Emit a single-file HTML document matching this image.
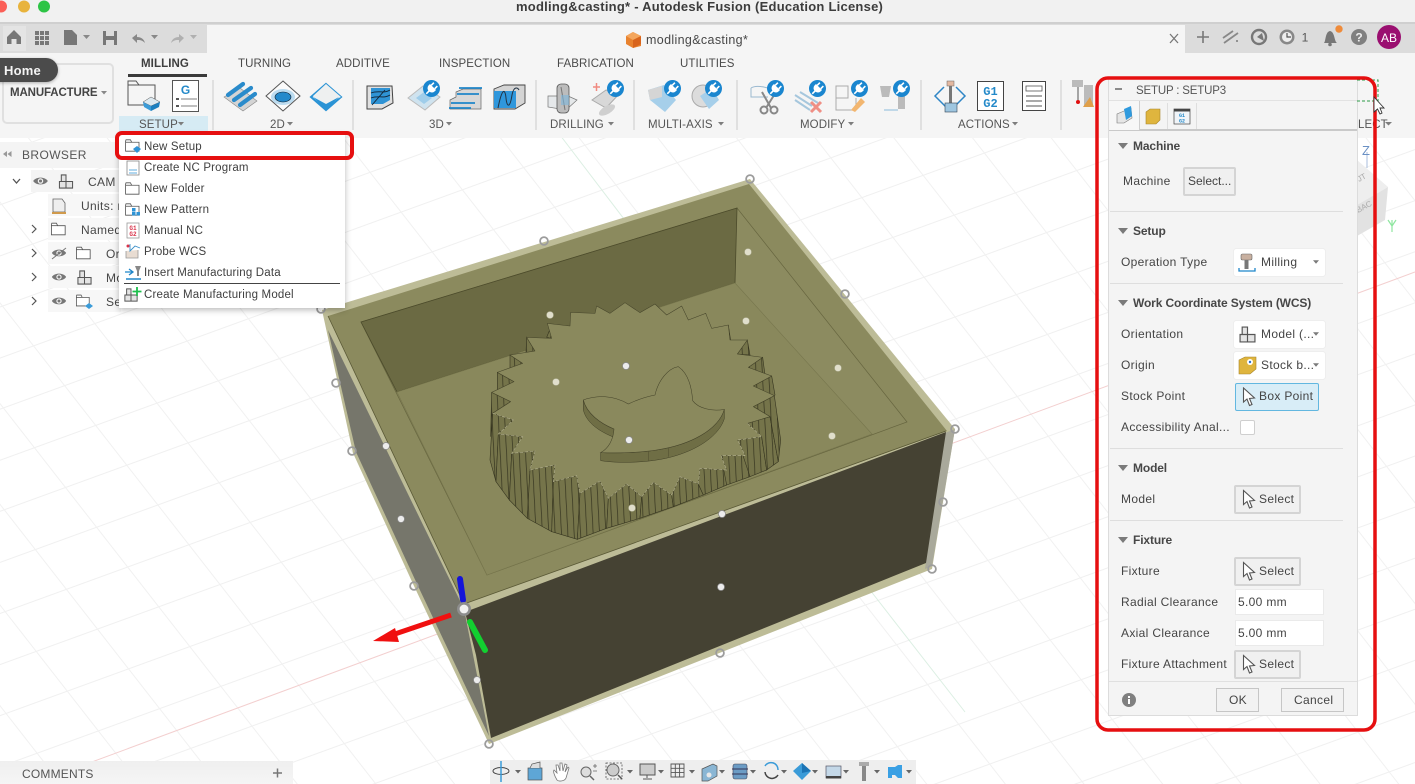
<!DOCTYPE html>
<html><head><meta charset="utf-8"><title>modling&amp;casting</title>
<style>
html,body{margin:0;padding:0;width:1415px;height:784px;overflow:hidden;background:#fff}
body{position:relative;font-family:"Liberation Sans",sans-serif;color:#444}
.a{position:absolute}
.t{position:absolute;white-space:nowrap;line-height:14px;font-size:12px;letter-spacing:.35px;color:#474747}
.b{font-weight:bold}
.tab{font-size:11.5px;letter-spacing:.1px;color:#4a4a4a}
.gl{font-size:11.5px;letter-spacing:.1px;color:#555}
.m{font-size:11.5px;letter-spacing:.18px;color:#3f3f3f}
.p{font-size:12px;letter-spacing:.33px;color:#444}
.h{font-size:12px;letter-spacing:-.13px;font-weight:bold;color:#474747}
.sep{position:absolute;left:1110px;width:233px;height:1px;background:#dedede}
.dd{position:absolute;left:1234px;width:91px;height:27px;background:#fff;border-radius:2px;box-shadow:0 0 1px #ccc}
.btn{position:absolute;background:#f0f0f0;border:2px solid #d4d4d4;box-sizing:border-box;border-radius:2px}
.inp{position:absolute;left:1235px;width:89px;height:26px;background:#fff;border:1px solid #eaeaea;box-sizing:border-box}
.rs{position:absolute;top:80px;width:2px;height:50px;background:#e0e0e0}
svg{position:absolute;left:0;top:0}
</style></head><body>

<!-- 3D canvas -->
<svg width="1415" height="784" viewBox="0 0 1415 784">
<defs>
<pattern id="g1" width="48" height="48" patternUnits="userSpaceOnUse" patternTransform="rotate(-20)"><path d="M0 .5H48" stroke="#f0f0f0" stroke-width="1"/></pattern>
<pattern id="g2" width="62" height="62" patternUnits="userSpaceOnUse" patternTransform="rotate(52)"><path d="M0 .5H62" stroke="#f1f1f1" stroke-width="1"/></pattern>
<pattern id="hatch" width="19" height="40" patternUnits="userSpaceOnUse" patternTransform="rotate(-3)"><rect width="19" height="40" fill="#75744a"/><path d="M1 0V40" stroke="#35341f" stroke-width="2.200"/></pattern>
</defs>
<rect width="1415" height="784" fill="#fff"/>
<rect width="1415" height="784" fill="url(#g1)"/>
<rect width="1415" height="784" fill="url(#g2)"/>
<path d="M0 796L1415 272" stroke="#f3cfcf" stroke-width="1" fill="none"/>
<path d="M560 135L640 240M870 590L965 712" stroke="#dcefe3" stroke-width="1" fill="none"/>

<!-- box -->
<polygon points="322,310 750,179 955,429 932,569 489,744 414,586 353,453" fill="#bdbc97"/>
<polygon points="328,330 356,452 418,586 489,736 464,609" fill="#76766b"/>
<polygon points="945,433 955,429 932,566 925,569" fill="#a9a99b"/>
<polygon points="465,612 946,432 926,563 491,738 476,655" fill="#454233"/>
<polygon points="328,316 749,184 947,431 464,604" fill="#8b8a5e"/>
<path d="M328 316L464 604L946 431" fill="none" stroke="#5a5936" stroke-width=".8"/>
<polygon points="361,322 737,208 907,422 487,575" fill="#8c8b60" stroke="#66653f" stroke-width=".7"/>
<polygon points="361,322 737,208 735,283 397,392" fill="#6b6a43" stroke="#4c4b2b" stroke-width=".8"/>
<polygon points="397,392 735,283 872,434 487,575" fill="#89885c" stroke="#77764d" stroke-width=".6"/>

<!-- gear -->
<g transform="translate(440 280) scale(.33333)">
<g fill="url(#hatch)" stroke="#35341f" stroke-width="1.800">
<polygon points="260,172 285,213 258,218"/>
<polygon points="210,225 248,250 210,272"/>
<polygon points="172,277 222,305 172,334"/>
<polygon points="155,337 212,365 158,400 152,470"/>
<polygon points="158,400 220,420 175,462 168,605 150,540"/>
<polygon points="175,462 248,470 215,520 208,660 168,605"/>
<polygon points="215,520 285,513 270,570 262,715 208,660"/>
<polygon points="270,570 345,555 340,605 335,755 262,715"/>
<polygon points="340,605 410,587 420,640 412,778 335,755"/>
<polygon points="420,640 480,603 505,655 500,745 412,778"/>
<polygon points="505,655 560,612 605,650 600,715 500,745"/>
<polygon points="605,650 640,607 695,645 700,680 600,715"/>
<polygon points="695,645 720,590 775,612 790,645 700,680"/>
<polygon points="775,612 780,565 860,570 860,615 790,645"/>
<polygon points="843,527 915,527 930,590 860,615"/>
<polygon points="893,480 965,470 980,570 930,590 910,530"/>
<polygon points="922,430 990,410 1015,545 980,570 965,470"/>
<polygon points="940,380 1003,347 1022,480 1015,545 990,410"/>
<polygon points="940,318 995,288 1005,345 945,375"/>
<polygon points="925,262 968,232 975,285 945,292"/>
<polygon points="892,222 922,180 930,225"/>
<polygon points="850,180 865,135 872,182"/>
<polygon points="790,140 797,100 808,145"/>
<polygon points="320,172 335,135 332,175"/>
</g>
<polygon fill="#8a895d" stroke="#45442a" stroke-width="1.600" stroke-linejoin="round" points="555,68 600,98 645,72 680,105 725,78 745,120 797,100 815,145 865,135 870,180 922,180 892,222 968,232 925,262 995,288 940,318 1003,347 940,380 990,410 922,430 965,470 893,480 915,527 843,527 860,570 780,565 775,612 720,590 695,645 640,607 605,650 560,612 505,655 480,603 420,640 410,587 340,605 345,555 270,570 285,513 215,520 248,470 175,462 220,420 158,400 212,365 155,337 222,305 172,277 248,250 210,225 285,213 260,172 335,175 322,130 390,138 392,97 465,100 470,78 510,100"/>
<polyline fill="none" stroke="#d9d7b2" stroke-opacity=".75" stroke-width="1.800" stroke-dasharray="11 4" points="922,430 965,470 893,480 915,527 843,527 860,570 780,565 775,612 720,590 695,645 640,607 605,650 560,612 505,655 480,603 420,640 410,587 340,605 345,555 270,570 285,513 215,520 248,470 175,462 220,420 158,400"/>
<path d="M430 360C440 400 480 430 522 447V472C480 455 440 430 430 390Z" fill="#6f6e45" stroke="#3f3e25" stroke-width="1.500"/>
<path d="M482 518V542C530 550 600 548 650 540C750 525 835 475 853 416V388C835 450 750 495 650 510C600 518 530 520 482 518Z" fill="#6f6e45" stroke="#3f3e25" stroke-width="1.500"/>
<path d="M430 360C470 345 520 345 565 372C590 360 620 350 645 345C655 300 685 265 715 260C745 280 755 320 758 362C775 385 815 395 853 388C835 450 750 495 650 510C600 518 530 520 482 518C505 505 520 480 522 447C480 430 440 400 430 360Z" fill="#8a895d" stroke="#45442a" stroke-width="1.600"/>
<path d="M625 515V542M685 503V530" stroke="#45442a" stroke-width="1.200"/>
</g>

<!-- handles -->
<g fill="none" stroke="#9c9c9c" stroke-width="1.800">
<circle cx="750" cy="179" r="3.900"/><circle cx="544" cy="241" r="3.900"/><circle cx="845" cy="294" r="3.900"/><circle cx="955" cy="429" r="3.900"/><circle cx="943" cy="502" r="3.900"/><circle cx="932" cy="569" r="3.900"/><circle cx="720" cy="653" r="3.900"/><circle cx="489" cy="744" r="3.900"/><circle cx="414" cy="586" r="3.900"/><circle cx="352" cy="451" r="3.900"/><circle cx="336" cy="383" r="3.900"/><circle cx="321" cy="309" r="3.900"/>
</g>
<g fill="#e0decb" stroke="#a5a585" stroke-width=".5"><circle cx="748" cy="252" r="3.500"/><circle cx="550" cy="315" r="3.500"/><circle cx="746" cy="321" r="3.500"/><circle cx="838" cy="368" r="3.500"/><circle cx="556" cy="382" r="3.500"/><circle cx="832" cy="436" r="3.500"/><circle cx="632" cy="508" r="3.500"/></g>
<g fill="#ececec" stroke="#888" stroke-width=".7"><circle cx="626" cy="366" r="3.500"/><circle cx="629" cy="440" r="3.500"/><circle cx="722" cy="514" r="3.500"/><circle cx="721" cy="587" r="3.500"/><circle cx="401" cy="519" r="3.500"/><circle cx="386" cy="446" r="3.500"/><circle cx="477" cy="680" r="3.500"/></g>

<!-- gizmo -->
<path d="M460 579L463 600" stroke="#1414d8" stroke-width="6" stroke-linecap="round"/>
<path d="M470 622L485 650" stroke="#12d030" stroke-width="6" stroke-linecap="round"/>
<path d="M451 615L392 635" stroke="#f01010" stroke-width="5"/>
<polygon points="373,641 395,628 399,642" fill="#f01010"/>
<circle cx="464" cy="609" r="7" fill="#8d8d8d"/><circle cx="464" cy="609" r="4.400" fill="#f1f1f1"/>

<!-- viewcube -->
<polygon points="1357,160 1388,187 1357,205" fill="#eeeeee"/>
<polygon points="1357,205 1388,187 1385,220 1357,236" fill="#e2e2e2"/>
<path d="M1367 152V168" stroke="#a9bedc" stroke-width="1"/>
<path d="M1392 220V232M1388 220L1392 226L1396 220" stroke="#8fe6a0" stroke-width="1.200" fill="none"/>
<text x="1359" y="182" font-family="Liberation Sans,sans-serif" font-size="8" fill="#aaa" transform="rotate(-28 1359 182)">JT</text>
<text x="1358" y="213" font-family="Liberation Sans,sans-serif" font-size="8" fill="#aaa" transform="rotate(-28 1358 213)">BAC</text>
</svg>
<div class="t" style="left:1362px;top:144px;color:#6a90c4;font-size:13px">Z</div>

<!-- title bar -->
<div class="a" style="left:0;top:0;width:1415px;height:22px;background:#f1f1f1;border-bottom:2px solid #cfcfcf"></div>
<div class="t b" style="left:516px;top:0;font-size:13px;letter-spacing:.24px;color:#3c3c3c">modling&amp;casting* - Autodesk Fusion (Education License)</div>

<!-- tab bar -->
<div class="a" style="left:0;top:24px;width:1415px;height:29px;background:#dcdcdc"></div>
<div class="a" style="left:207px;top:25px;width:978px;height:28px;background:#f5f5f5"></div>
<div class="a" style="left:3px;top:26px;width:23px;height:25px;background:#e4e4e4"></div>
<div class="t" style="left:646px;top:33px;font-size:12.500px;letter-spacing:.35px">modling&amp;casting*</div>

<!-- ribbon -->
<div class="a" style="left:0;top:53px;width:1415px;height:85px;background:#f5f5f5"></div>
<div class="a" style="left:2px;top:63px;width:112px;height:61px;box-sizing:border-box;border:2px solid #e0e0e0;border-radius:5px"></div>
<div class="t b" style="left:10px;top:86px;font-size:11.500px;letter-spacing:-.12px;color:#444">MANUFACTURE</div>
<div class="a" style="left:128px;top:74px;width:79px;height:2.500px;background:#3a3a3a"></div>
<div class="a" style="left:119px;top:116px;width:89px;height:16px;background:#d6ebf4"></div>
<div class="rs" style="left:212px"></div><div class="rs" style="left:352px"></div><div class="rs" style="left:535px"></div><div class="rs" style="left:633px"></div><div class="rs" style="left:736px"></div><div class="rs" style="left:920px"></div><div class="rs" style="left:1060px"></div>

<div class="t tab b" style="left:141px;top:57px;font-weight:bold;color:#3f3f3f">MILLING</div>
<div class="t tab" style="left:238px;top:57px">TURNING</div>
<div class="t tab" style="left:336px;top:57px">ADDITIVE</div>
<div class="t tab" style="left:439px;top:57px">INSPECTION</div>
<div class="t tab" style="left:557px;top:57px">FABRICATION</div>
<div class="t tab" style="left:680px;top:57px">UTILITIES</div>

<div class="t gl" style="left:139px;top:118px">SETUP</div>
<div class="t gl" style="left:270px;top:118px">2D</div>
<div class="t gl" style="left:429px;top:118px">3D</div>
<div class="t gl" style="left:550px;top:118px">DRILLING</div>
<div class="t gl" style="left:648px;top:118px">MULTI-AXIS</div>
<div class="t gl" style="left:800px;top:118px">MODIFY</div>
<div class="t gl" style="left:958px;top:118px">ACTIONS</div>

<!-- Home tooltip -->
<div class="a" style="left:-12px;top:58px;width:70px;height:24px;background:#4b4b4b;border-radius:12px;box-shadow:0 1px 3px rgba(0,0,0,.3)"></div>
<div class="t b" style="left:4px;top:64px;font-size:13px;letter-spacing:.2px;color:#f4f4f4">Home</div>

<!-- browser -->
<div class="a" style="left:0;top:142px;width:130px;height:26px;background:#f4f4f4"></div>
<div class="a" style="left:31px;top:170px;width:90px;height:22px;background:#f4f4f4"></div>
<div class="a" style="left:48px;top:194px;width:73px;height:22px;background:#f7f7f7"></div>
<div class="a" style="left:48px;top:218px;width:73px;height:22px;background:#f7f7f7"></div>
<div class="a" style="left:48px;top:242px;width:73px;height:22px;background:#f7f7f7"></div>
<div class="a" style="left:48px;top:266px;width:73px;height:22px;background:#f7f7f7"></div>
<div class="a" style="left:48px;top:290px;width:73px;height:22px;background:#f7f7f7"></div>
<div class="t" style="left:22px;top:148px;letter-spacing:.4px;color:#555">BROWSER</div>
<div class="t" style="left:88px;top:175px">CAM R</div>
<div class="t" style="left:81px;top:199px">Units: m</div>
<div class="t" style="left:81px;top:223px">Named</div>
<div class="t" style="left:106px;top:247px">Or</div>
<div class="t" style="left:106px;top:271px">Mo</div>
<div class="t" style="left:106px;top:295px">Se</div>

<!-- comments -->
<div class="a" style="left:0;top:761px;width:293px;height:23px;background:linear-gradient(#efefef,#f5f5f5)"></div>
<div class="t" style="left:22px;top:767px;letter-spacing:.2px;color:#555">COMMENTS</div>

<!-- bottom toolbar -->
<div class="a" style="left:490px;top:760px;width:426px;height:24px;background:#eeeeee"></div>

<!-- menu -->
<div class="a" style="left:119px;top:134px;width:226px;height:174px;background:#fff;box-shadow:0 2px 6px rgba(0,0,0,.28)"></div>
<div class="a" style="left:124px;top:283px;width:216px;height:1px;background:#444"></div>
<div class="t m" style="left:144px;top:140px">New Setup</div>
<div class="t m" style="left:144px;top:161px">Create NC Program</div>
<div class="t m" style="left:144px;top:182px">New Folder</div>
<div class="t m" style="left:144px;top:203px">New Pattern</div>
<div class="t m" style="left:144px;top:224px">Manual NC</div>
<div class="t m" style="left:144px;top:245px">Probe WCS</div>
<div class="t m" style="left:144px;top:266px">Insert Manufacturing Data</div>
<div class="t m" style="left:144px;top:288px">Create Manufacturing Model</div>

<!-- panel -->
<div class="a" style="left:1108px;top:78px;width:248px;height:636px;background:#f4f4f4;border:1px solid #dcdcdc;box-sizing:content-box"></div>
<div class="a" style="left:1109px;top:100px;width:248px;height:1px;background:#e2e2e2"></div>
<div class="a" style="left:1109px;top:129px;width:248px;height:1.500px;background:#c9c9c9"></div>
<div class="a" style="left:1109px;top:101px;width:30px;height:29px;background:#f7f7f7;border-right:1px solid #cfcfcf"></div>
<div class="a" style="left:1167px;top:103px;width:1px;height:26px;background:#dedede"></div>
<div class="a" style="left:1196px;top:103px;width:1px;height:26px;background:#dedede"></div>
<div class="t" style="left:1136px;top:84px;font-size:11.500px;letter-spacing:-.18px;color:#555">SETUP : SETUP3</div>

<div class="t h" style="left:1133px;top:139px">Machine</div>
<div class="t p" style="left:1123px;top:174px">Machine</div>
<div class="btn" style="left:1183px;top:167px;width:53px;height:29px"></div>
<div class="t p" style="left:1188px;top:174px;letter-spacing:0">Select...</div>
<div class="sep" style="top:211px"></div>

<div class="t h" style="left:1133px;top:224px">Setup</div>
<div class="t p" style="left:1121px;top:255px">Operation Type</div>
<div class="dd" style="top:249px"></div>
<div class="t p" style="left:1261px;top:255px">Milling</div>
<div class="sep" style="top:283px"></div>

<div class="t h" style="left:1133px;top:296px">Work Coordinate System (WCS)</div>
<div class="t p" style="left:1121px;top:327px">Orientation</div>
<div class="dd" style="top:321px"></div>
<div class="t p" style="left:1261px;top:327px">Model (...</div>
<div class="t p" style="left:1121px;top:358px">Origin</div>
<div class="dd" style="top:352px"></div>
<div class="t p" style="left:1261px;top:358px">Stock b...</div>
<div class="t p" style="left:1121px;top:389px">Stock Point</div>
<div class="a" style="left:1235px;top:383px;width:84px;height:28px;box-sizing:border-box;background:#d8edf7;border:1.500px solid #62b7e0;border-radius:2px"></div>
<div class="t p" style="left:1259px;top:389px">Box Point</div>
<div class="t p" style="left:1121px;top:420px">Accessibility Anal...</div>
<div class="a" style="left:1240px;top:420px;width:15px;height:15px;box-sizing:border-box;background:#fff;border:1px solid #cfcfcf;border-radius:2px"></div>
<div class="sep" style="top:448px"></div>

<div class="t h" style="left:1133px;top:461px">Model</div>
<div class="t p" style="left:1121px;top:492px">Model</div>
<div class="btn" style="left:1234px;top:485px;width:67px;height:29px"></div>
<div class="t p" style="left:1259px;top:492px">Select</div>
<div class="sep" style="top:520px"></div>

<div class="t h" style="left:1133px;top:533px">Fixture</div>
<div class="t p" style="left:1121px;top:564px">Fixture</div>
<div class="btn" style="left:1234px;top:557px;width:67px;height:29px"></div>
<div class="t p" style="left:1259px;top:564px">Select</div>
<div class="t p" style="left:1121px;top:595px">Radial Clearance</div>
<div class="inp" style="top:589px"></div>
<div class="t p" style="left:1238px;top:595px">5.00 mm</div>
<div class="t p" style="left:1121px;top:626px">Axial Clearance</div>
<div class="inp" style="top:620px"></div>
<div class="t p" style="left:1238px;top:626px">5.00 mm</div>
<div class="t p" style="left:1121px;top:657px">Fixture Attachment</div>
<div class="btn" style="left:1234px;top:650px;width:67px;height:29px"></div>
<div class="t p" style="left:1259px;top:657px">Select</div>

<div class="a" style="left:1109px;top:681px;width:248px;height:1px;background:#e0e0e0"></div>
<div class="a" style="left:1216px;top:688px;width:43px;height:24px;box-sizing:border-box;border:1px solid #c6c6c6;background:#f2f2f2"></div>
<div class="a" style="left:1281px;top:688px;width:63px;height:24px;box-sizing:border-box;border:1px solid #c6c6c6;background:#f2f2f2"></div>
<div class="t p" style="left:1229px;top:693px">OK</div>
<div class="t p" style="left:1294px;top:693px">Cancel</div>

<div class="t gl" style="left:1358px;top:118px">LECT</div>

<!-- icon overlay -->
<svg width="1415" height="784" viewBox="0 0 1415 784">
<defs>
<symbol id="plug" viewBox="0 0 16 16"><circle cx="8" cy="8" r="8" fill="#1a86cf"/><g transform="rotate(45 8 8)"><path d="M5.700 2.500V6M10.300 2.500V6M8 10V15" stroke="#fff" stroke-width="1.500" fill="none"/><path d="M4 6H12V8A4 3.500 0 0 1 4 8Z" fill="#fff"/></g></symbol>
<symbol id="eye" viewBox="0 0 18 12"><path d="M1 6C4 1 14 1 17 6C14 11 4 11 1 6Z" fill="#777"/><circle cx="9" cy="6" r="3" fill="#f4f4f4"/><circle cx="9" cy="6" r="1.700" fill="#777"/></symbol>
<symbol id="folder" viewBox="0 0 18 16"><path d="M.5 2.500V15H17V4H8L6.500 1H1Z" fill="#fff" stroke="#555" stroke-width="1"/><path d="M.5 4H8" stroke="#555"/></symbol>
<symbol id="comp" viewBox="0 0 16 16"><path d="M1 8H8V15H1ZM8 8H15V15H8ZM3 1H8V8H3Z" fill="#e4e4e4" stroke="#555" stroke-width="1.100"/></symbol>
<symbol id="cur" viewBox="0 0 14 20"><path d="M1.500 1V15L5 12L7.500 18.500L10 17.500L7.500 11.500L12.500 11Z" fill="#fff" stroke="#555" stroke-width="1.100"/></symbol>
<symbol id="stp" viewBox="0 0 10 6"><path d="M0 0H10L5 6Z" fill="#7a7a7a"/></symbol>
</defs>

<!-- traffic lights -->
<circle cx="1" cy="6.500" r="6" fill="#fb5f57"/><circle cx="24" cy="6.500" r="6" fill="#e8b33c"/><circle cx="44" cy="6.500" r="6" fill="#2dc445"/>

<!-- top left icons -->
<path d="M7 37L14 30L21 37V44H16.500V39H11.500V44H7Z" fill="#777"/>
<g fill="#777"><rect x="35" y="31" width="4" height="4"/><rect x="40" y="31" width="4" height="4"/><rect x="45" y="31" width="4" height="4"/><rect x="35" y="36" width="4" height="4"/><rect x="40" y="36" width="4" height="4"/><rect x="45" y="36" width="4" height="4"/><rect x="35" y="41" width="4" height="4"/><rect x="40" y="41" width="4" height="4"/><rect x="45" y="41" width="4" height="4"/></g>
<path d="M64 30H72L77 35V45H64Z" fill="#777"/>
<path d="M83 35H90L86.500 39Z" fill="#888"/>
<path d="M103 31H117V45H103Z" fill="#777"/><rect x="106" y="31" width="8" height="5" fill="#dcdcdc"/><rect x="106" y="40" width="8" height="5" fill="#dcdcdc"/>
<path d="M132 38L137 34V37C141 37 144 39 145 43C142 40 140 40 137 40V43Z" fill="#888"/>
<path d="M151 35H158L154.500 39Z" fill="#888"/>
<path d="M184 38L179 34V37C175 37 172 39 171 43C174 40 176 40 179 40V43Z" fill="#b0b0b0"/>
<path d="M190 35H197L193.500 39Z" fill="#b0b0b0"/>
<path d="M101 91H107L104 94.500Z" fill="#888"/>

<!-- doc tab cube -->
<polygon points="633,32 641,36 641,46 633,48 626,44 626,36" fill="#e8822e"/><polygon points="626,36 633,32 641,36 633,40" fill="#f4a65d"/><polygon points="633,40 641,36 641,44 633,48" fill="#d8641c"/>

<!-- right top icons -->
<path d="M1170 34L1178 43M1178 34L1170 43" stroke="#777" stroke-width="1.300"/>
<path d="M1203 31V43M1197 37H1209" stroke="#777" stroke-width="1.600"/>
<path d="M1223 38L1233 31M1224 43L1238 33M1236 41H1238" stroke="#888" stroke-width="1.800" fill="none"/>
<circle cx="1259" cy="37" r="7" fill="none" stroke="#777" stroke-width="2.400"/><path d="M1257 37L1262 33L1264 41Z" fill="#777"/>
<circle cx="1287" cy="37" r="7.500" fill="#888"/><circle cx="1287" cy="37" r="5" fill="#eee"/><path d="M1287 33V37H1291" stroke="#555" fill="none" stroke-width="1.200"/>
<path d="M1324 43C1326 41 1325 32 1330 31C1335 32 1334 41 1337 43Z" fill="#777"/><circle cx="1330" cy="44.500" r="1.800" fill="#777"/>
<circle cx="1339" cy="29" r="3.700" fill="#ef8b3a"/>
<circle cx="1359" cy="37" r="8" fill="#808080"/>
<circle cx="1389" cy="37" r="12" fill="#9a0f70"/>

<!-- setup group icons -->
<path d="M128 81H136L139 85H155V105H128Z M128 85H139" fill="#f5f5f5" stroke="#555" stroke-width="1"/>
<polygon points="143,102 151,97 160,102 151,106" fill="#dce9f0" stroke="#555" stroke-width=".5"/>
<polygon points="143,102 151,106 151,111 144,107" fill="#3a9bd8"/><polygon points="151,106 160,102 159,107 151,111" fill="#1b7fbf"/>
<rect x="172.500" y="80.500" width="26" height="31" fill="#fff" stroke="#555"/>
<path d="M181 99H197M181 106H197" stroke="#555" stroke-width=".8"/><rect x="176" y="98" width="3" height="2" fill="#555"/><rect x="176" y="105" width="3" height="2" fill="#555"/>
<text x="185.500" y="94" font-family="Liberation Sans,sans-serif" font-weight="bold" font-size="12" fill="#2389c9" text-anchor="middle">G</text>

<!-- 2D -->
<polygon points="224,97 243,111 257,101 240,88" fill="#d4d4d4" stroke="#888" stroke-width=".6"/>
<g stroke="#2a8bcb" stroke-width="4.200" stroke-linecap="round"><path d="M228 95L243 84"/><path d="M234 100L251 88"/><path d="M240 105L255 94"/></g>
<polygon points="283,81 300,96 283,111 266,96" fill="#fbfbfb" stroke="#555" stroke-width="1"/>
<ellipse cx="283" cy="97" rx="12" ry="8" fill="#bcdcf0"/><ellipse cx="283" cy="97" rx="8" ry="5" fill="#2389cb" stroke="#123" stroke-width=".6"/>
<polygon points="326,84 341,97 326,110 311,97" fill="#d8eefb" stroke="#2a93d5" stroke-width="2"/>
<polygon points="326,84 341,97 326,104 313,96" fill="#eef0f0"/>
<polygon points="313,97 326,104 339,97 326,110" fill="#2a93d5"/>

<!-- 3D -->
<polygon points="367,86 392,86 393,103 382,109 367,109" fill="#e0e0e0" stroke="#444" stroke-width="1"/>
<polygon points="371,88 390,88 390,100 383,104 371,104" fill="#2f93d5"/>
<path d="M371 93C378 90 384 94 390 90M371 98C378 95 384 99 390 95M372 105L385 90" stroke="#123" stroke-width=".9" fill="none"/>
<polygon points="408,98 423,86 440,97 425,110" fill="#cfe3ef" stroke="#bbb"/>
<polygon points="416,98 424,92 432,98 424,104" fill="#9fcdea"/>
<use href="#plug" x="423" y="80" width="17" height="17"/>
<polygon points="450,109 450,100 456,97 456,92 463,89 481,89 481,109" fill="#d8d8d8" stroke="#666" stroke-width=".7"/>
<path d="M459 88H482M457 94H479M451 103H475M449 108H471" stroke="#1f86c9" stroke-width="1.700"/>
<polygon points="494,89 504,85 525,85 525,103 515,109 494,109" fill="#d4d4d4" stroke="#444" stroke-width=".9"/>
<polygon points="494,91 516,91 516,108 494,108" fill="#2f97dc"/>
<path d="M498 108C502 88 505 88 506 98C507 108 510 108 512 95C514 85 518 88 519 90" fill="none" stroke="#234" stroke-width="1"/>

<!-- drilling -->
<polygon points="548,96 568,96 577,100 566,110 548,107" fill="#e5e8ea" stroke="#777" stroke-width=".7"/>
<rect x="557" y="84" width="12" height="29" rx="4" fill="#bcbcbc" stroke="#555" stroke-width=".8"/>
<path d="M561 87L565 110" stroke="#777"/>
<rect x="561" y="95" width="8" height="10" fill="#7fb8dc" opacity=".6"/>
<path d="M593 87H600M596.500 83V91" stroke="#f08a80" stroke-width="1.500"/>
<polygon points="592,100 606,90 620,93 606,108" fill="#d8d8d8" stroke="#aaa"/>
<ellipse cx="607" cy="110" rx="9" ry="4" fill="#cfcfcf" transform="rotate(-30 607 110)"/>
<use href="#plug" x="607" y="80" width="17" height="17"/>

<!-- multi axis -->
<polygon points="648,90 664,85 676,100 665,112 650,100" fill="#a6cfea"/><polygon points="648,90 662,86 662,97 650,100" fill="#d5d5d5"/>
<use href="#plug" x="664" y="80" width="17" height="17"/>
<circle cx="703" cy="96" r="11" fill="#dcdcdc" stroke="#aaa"/><polygon points="700,96 712,88 719,100 709,109" fill="#a6cfea"/>
<use href="#plug" x="705" y="80" width="17" height="17"/>

<!-- modify -->
<path d="M751 88C757 84 770 88 778 92M751 88V97H768" fill="none" stroke="#9ab9d0" stroke-width="1"/>
<path d="M762 92L771 108M776 92L766 108" stroke="#888" stroke-width="2"/><circle cx="764" cy="110" r="3.500" fill="none" stroke="#888" stroke-width="2"/><circle cx="774" cy="110" r="3.500" fill="none" stroke="#888" stroke-width="2"/>
<use href="#plug" x="767" y="80" width="17" height="17"/>
<path d="M795 95L812 106M795 100L810 110M800 92L818 103" stroke="#a6c7dd" stroke-width="2" fill="none"/>
<path d="M811 102L821 112M821 102L811 112" stroke="#ef8f85" stroke-width="3"/>
<use href="#plug" x="809" y="80" width="17" height="17"/>
<path d="M836 86H848V98H836ZM836 98V110H856V98" fill="none" stroke="#aaa"/>
<path d="M851 110L861 98L865 102L855 112Z" fill="#f2b670"/>
<use href="#plug" x="851" y="80" width="17" height="17"/>
<path d="M880 86H891L889 97H882Z" fill="#bbb"/><rect x="898" y="92" width="7" height="17" fill="#bbb"/>
<path d="M884 110H898" stroke="#8abada" stroke-width="1"/>
<use href="#plug" x="893" y="80" width="17" height="17"/>

<!-- actions -->
<path d="M944 87L935 96L950 111L965 96L956 87" fill="none" stroke="#2f86c6" stroke-width="1.500"/>
<rect x="947" y="81" width="7" height="5" fill="#e4b8a0" stroke="#666" stroke-width=".5"/><path d="M950.500 86V104" stroke="#777" stroke-width="3"/>
<rect x="945" y="103" width="12" height="9" fill="#9ec6e0" stroke="#345" stroke-width=".6"/>
<rect x="977.500" y="81.500" width="26" height="29" fill="#fff" stroke="#444" stroke-width="1"/>
<text x="990.500" y="95" font-family="Liberation Mono,monospace" font-weight="bold" font-size="12" fill="#2389c9" text-anchor="middle">G1</text>
<text x="990.500" y="107" font-family="Liberation Mono,monospace" font-weight="bold" font-size="12" fill="#2389c9" text-anchor="middle">G2</text>
<rect x="1022.500" y="81.500" width="23" height="29" fill="#fff" stroke="#444" stroke-width="1"/>
<rect x="1026" y="86" width="16" height="5" fill="none" stroke="#555" stroke-width=".8"/><path d="M1026 96H1042M1026 101H1042M1026 106H1042" stroke="#555" stroke-width=".9"/>
<rect x="1072" y="80" width="11" height="7" fill="#bbb"/><path d="M1078 87V100" stroke="#555"/><circle cx="1078" cy="102" r="2" fill="#e01010"/>
<rect x="1084" y="85" width="9" height="22" fill="#bbb"/><polygon points="1083,107 1090,97 1094,107" fill="#e0a04a"/>

<!-- group carets -->
<g fill="#7d7d7d"><path d="M178 122H184L181 125.500Z"/><path d="M287 122H293L290 125.500Z"/><path d="M446 122H452L449 125.500Z"/><path d="M608 122H614L611 125.500Z"/><path d="M718 122H724L721 125.500Z"/><path d="M848 122H854L851 125.500Z"/><path d="M1012 122H1018L1015 125.500Z"/><path d="M1385 122H1392L1388.500 125.500Z"/></g>

<!-- browser icons -->
<path d="M3 154L7 151V157ZM7.500 154L11.500 151V157Z" fill="#999"/>
<path d="M13 179L16.500 183L20 179" fill="none" stroke="#555" stroke-width="1.300"/>
<use href="#eye" x="32" y="175.500" width="17" height="11"/>
<use href="#comp" x="58" y="174" width="16" height="15"/>
<path d="M53 199H62L65 203V212H53Z" fill="#eee" stroke="#666" stroke-width=".8"/><rect x="52" y="212" width="14" height="2" fill="#d09a4c"/>
<path d="M32 225L36 229L32 233M32 249L36 253L32 257M32 273L36 277L32 281M32 297L36 301L32 305" fill="none" stroke="#555" stroke-width="1.200"/>
<use href="#folder" x="51" y="222" width="15" height="14"/>
<use href="#eye" x="51" y="247.500" width="16" height="11"/><path d="M52 259L66 248" stroke="#777"/>
<use href="#folder" x="76" y="246" width="15" height="14"/>
<use href="#eye" x="51" y="271.500" width="16" height="11"/>
<use href="#comp" x="77" y="270" width="15" height="15"/>
<use href="#eye" x="51" y="295.500" width="16" height="11"/>
<use href="#folder" x="76" y="294" width="14" height="13"/><polygon points="85,306 89,303 93,306 89,309" fill="#3a9bd8"/>
<path d="M273 773H282M277.500 768.500V777.500" stroke="#777" stroke-width="1.500"/>

<!-- menu icons -->
<use href="#folder" x="125" y="139" width="15" height="13"/><polygon points="133,149 137,146 141,149 137,153" fill="#2f93d5"/>
<rect x="127" y="161" width="12" height="14" fill="#fff" stroke="#888" stroke-width=".8"/><path d="M129 170H137M129 173H137" stroke="#2f93d5" stroke-width=".8"/>
<use href="#folder" x="125" y="182" width="15" height="13"/>
<use href="#folder" x="125" y="203" width="15" height="13"/><rect x="132" y="208" width="3.500" height="3.500" fill="#2f93d5"/><rect x="136.500" y="212" width="3.500" height="3.500" fill="#2f93d5"/><rect x="132" y="212" width="3.500" height="3.500" fill="#2f93d5"/>
<rect x="127" y="223" width="12" height="15" fill="#fff" stroke="#999" stroke-width=".8"/><text x="133" y="230" font-family="Liberation Mono,monospace" font-weight="bold" font-size="6" fill="#d8334a" text-anchor="middle">G1</text><text x="133" y="236" font-family="Liberation Mono,monospace" font-weight="bold" font-size="6" fill="#d8334a" text-anchor="middle">G2</text>
<path d="M126 251V258H138V250" fill="#e8dcd2" stroke="#999" stroke-width=".8"/><path d="M130 244V251L135 246L140 248" fill="none" stroke="#3a8fc9" stroke-width=".9"/><circle cx="128" cy="246" r="1.500" fill="#d8334a"/>
<path d="M125 272H132M129 269L133 272L129 275" stroke="#1f86c9" stroke-width="1.300" fill="none"/><path d="M135 266H141L139 271V276H137V271Z" fill="#888"/><path d="M126 279H141" stroke="#1f86c9" stroke-width="1.500"/>
<use href="#comp" x="124" y="288" width="14" height="14"/><path d="M137 287V296M132.500 291.500H141.500" stroke="#1fbf4d" stroke-width="1.800"/>

<!-- panel header / tabs -->
<path d="M1115 89H1122" stroke="#666" stroke-width="1.500"/>
<polygon points="1117,114 1124,111 1131,108 1132,118 1124,123 1117,123" fill="#e6e6e6" stroke="#777" stroke-width=".6"/>
<polygon points="1124,109 1131,106 1132,116 1126,120" fill="#2f9ade"/>
<polygon points="1146,112 1150,109 1160,109 1160,120 1156,124 1146,124" fill="#dfb53e" stroke="#a8862c" stroke-width=".6"/>
<rect x="1174" y="109" width="16" height="15" fill="#f0f4f8" stroke="#444" stroke-width=".7"/><rect x="1174" y="109" width="16" height="2.500" fill="#444"/>
<text x="1182" y="117" font-family="Liberation Mono,monospace" font-weight="bold" font-size="5" fill="#2389c9" text-anchor="middle">G1</text><text x="1182" y="122.500" font-family="Liberation Mono,monospace" font-weight="bold" font-size="5" fill="#2389c9" text-anchor="middle">G2</text>

<!-- section triangles -->
<use href="#stp" x="1118" y="143" width="10" height="6"/><use href="#stp" x="1118" y="228" width="10" height="6"/><use href="#stp" x="1118" y="300" width="10" height="6"/><use href="#stp" x="1118" y="465" width="10" height="6"/><use href="#stp" x="1118" y="537" width="10" height="6"/>

<!-- control icons -->
<rect x="1241" y="254" width="11" height="6" rx="1.500" fill="#c8b0a0" stroke="#666" stroke-width=".6"/><path d="M1246.500 260V269" stroke="#777" stroke-width="4"/><path d="M1239 268V271H1255V268" fill="none" stroke="#1f86c9" stroke-width="1.300"/>
<use href="#stp" x="1313" y="260" width="6" height="4"/><use href="#stp" x="1313" y="332" width="6" height="4"/><use href="#stp" x="1313" y="363" width="6" height="4"/>
<use href="#comp" x="1239" y="326" width="17" height="17"/>
<polygon points="1239,360 1245,357 1256,357 1256,369 1250,374 1239,374" fill="#dfb53e" stroke="#a8862c" stroke-width=".6"/><circle cx="1250" cy="362" r="3" fill="#fff"/><circle cx="1250" cy="362" r="1.200" fill="#2a6fc9"/>
<use href="#cur" x="1242" y="387" width="14" height="20"/>
<use href="#cur" x="1242" y="489" width="14" height="21"/>
<use href="#cur" x="1242" y="561" width="14" height="21"/>
<use href="#cur" x="1242" y="654" width="14" height="21"/>
<circle cx="1129" cy="700" r="7" fill="#808080"/><rect x="1128" y="699" width="2" height="5" fill="#fff"/><rect x="1128" y="696" width="2" height="2" fill="#fff"/>

<!-- bottom toolbar icons -->
<ellipse cx="501" cy="771" rx="8" ry="3.500" fill="none" stroke="#444" stroke-width="1"/><path d="M501 761V782" stroke="#3a9bd8" stroke-width="1.500"/>
<rect x="528" y="768" width="14" height="12" fill="#5ea6d6" stroke="#555" stroke-width=".7"/><path d="M530 768L532 764L540 762V768" fill="#ddd" stroke="#555" stroke-width=".7"/>
<path d="M557 780C554 775 553 771 554 770L557 773L556 765L558 765L560 771L560 763L562 763L563 771L565 764L567 765L565 772L568 767L569 768L566 778C565 781 559 782 557 780Z" fill="#fff" stroke="#777" stroke-width=".8"/>
<circle cx="586" cy="772" r="5" fill="#ddd" stroke="#666"/><path d="M590 776L594 780" stroke="#666" stroke-width="1.500"/><path d="M593 766H597M595 764V768M593 771H597" stroke="#666" stroke-width=".8"/>
<rect x="606" y="763" width="16" height="16" fill="none" stroke="#555" stroke-dasharray="2 1.500" stroke-width=".8"/><circle cx="613" cy="770" r="6" fill="#ccc" stroke="#666"/><path d="M618 775L622 779" stroke="#555" stroke-width="1.500"/>
<rect x="640" y="764" width="15" height="11" fill="#ccc" stroke="#555"/><path d="M647 775V778M643 779H652" stroke="#555"/>
<path d="M671 764H684V777H671ZM675.300 764V777M679.600 764V777M671 768.300H684M671 772.600H684" fill="none" stroke="#555" stroke-width=".9"/>
<polygon points="702,769 713,764 717,766 717,776 708,781 702,781" fill="#8ab6d4" stroke="#555" stroke-width=".7"/><circle cx="709" cy="775" r="2.500" fill="#e8e8e8"/>
<rect x="733" y="764" width="14" height="15" rx="2" fill="#6c9cc5" stroke="#445" stroke-width=".6"/><path d="M732 769H748M732 774H748" stroke="#335" stroke-width=".9"/>
<path d="M765 766A7 7 0 0 1 778 770" fill="none" stroke="#3a9bd8" stroke-width="1.500"/><path d="M778 775A7 7 0 0 1 765 772" fill="none" stroke="#444" stroke-width="1.500"/>
<polygon points="802,763 811,771 802,780 793,771" fill="#3a9bd8"/><polygon points="802,763 811,771 802,773" fill="#1b74b5"/>
<rect x="826" y="766" width="15" height="12" fill="#c4d8e8" stroke="#556" stroke-width=".7"/><rect x="826" y="776" width="15" height="2.500" fill="#444"/>
<rect x="859" y="762" width="10" height="4" fill="#aaa"/><path d="M864 766V781" stroke="#888" stroke-width="4"/>
<path d="M888 767H895L898 765H902V778H898L895 775H892V778H888Z" fill="#3aa0e4"/>
<g fill="#666"><path d="M515 770H521L518 773.500Z"/><path d="M627 770H633L630 773.500Z"/><path d="M658 770H664L661 773.500Z"/><path d="M689 770H695L692 773.500Z"/><path d="M719 770H725L722 773.500Z"/><path d="M750 770H756L753 773.500Z"/><path d="M781 770H787L784 773.500Z"/><path d="M812 770H818L815 773.500Z"/><path d="M843 770H849L846 773.500Z"/><path d="M874 770H880L877 773.500Z"/><path d="M906 770H912L909 773.500Z"/></g>

<!-- dashed select box -->
<path d="M1357 80H1378V101H1357" fill="none" stroke="#2d9a46" stroke-width="1" stroke-dasharray="3 2"/>

<!-- red boxes -->
<rect x="117" y="133" width="235" height="25" rx="5" fill="none" stroke="#e60f10" stroke-width="4"/>
<rect x="1097" y="78" width="278" height="652" rx="11" fill="none" stroke="#e60f10" stroke-width="3.500"/>

<!-- cursor -->
<path d="M1374 97V112L1377.500 109L1380 114L1382 113L1380 108H1384Z" fill="#fff" stroke="#333" stroke-width=".9"/>
<text x="1389" y="42" font-family="Liberation Sans,sans-serif" font-size="12" fill="#fff" text-anchor="middle">AB</text>
<text x="1359" y="41.500" font-family="Liberation Sans,sans-serif" font-weight="bold" font-size="12" fill="#eee" text-anchor="middle">?</text>
<text x="1305" y="41.500" font-family="Liberation Sans,sans-serif" font-size="12" fill="#555" text-anchor="middle">1</text>
</svg>

</body></html>
